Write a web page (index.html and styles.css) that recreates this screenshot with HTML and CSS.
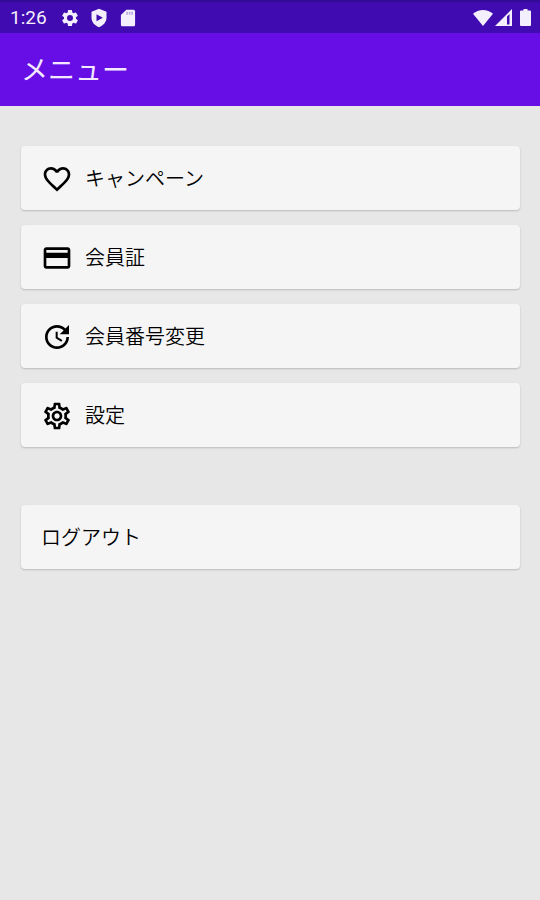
FILE: index.html
```html
<!DOCTYPE html>
<html lang="ja">
<head>
<meta charset="utf-8">
<meta name="viewport" content="width=device-width, initial-scale=1">
<title>メニュー</title>
<link rel="stylesheet" href="styles.css">
</head>
<body>
<div class="status-bar">
  <span class="clock">1:26</span>
  <div class="notifications">
    <svg class="status-icon" viewBox="0 0 24 24" aria-hidden="true"><path d="M19.14 12.94c.04-.3.06-.61.06-.94 0-.32-.02-.64-.07-.94l2.03-1.58a.49.49 0 0 0 .12-.61l-1.92-3.32a.488.488 0 0 0-.59-.22l-2.39.96c-.5-.38-1.03-.7-1.62-.94l-.36-2.54a.484.484 0 0 0-.48-.41h-3.84c-.24 0-.43.17-.47.41l-.36 2.54c-.59.24-1.13.57-1.62.94l-2.39-.96c-.22-.08-.47 0-.59.22L2.740 8.870c-.12.21-.08.47.12.61l2.030 1.580c-.05.3-.09.63-.09.94s.02.64.07.94l-2.030 1.580a.49.49 0 0 0-.12.61l1.920 3.320c.12.22.37.29.59.22l2.390-.96c.5.38 1.030.7 1.620.94l.36 2.540c.05.24.24.41.48.41h3.840c.24 0 .44-.17.47-.41l.36-2.540c.59-.24 1.130-.56 1.620-.94l2.390.96c.22.08.47 0 .59-.22l1.920-3.320c.12-.22.07-.47-.12-.61l-2.010-1.580zM12 15.600A3.600 3.600 0 1 1 12 8.400a3.600 3.600 0 0 1 0 7.200z"/></svg>
    <svg class="status-icon" viewBox="0 0 24 24" aria-hidden="true"><path fill-rule="evenodd" d="M12 1 3 4.500v7c0 5.300 3.600 9.700 9 11.500 5.400-1.800 9-6.200 9-11.500v-7L12 1zM9 7.500v8.500l7.500-4.250L9 7.500z"/></svg>
    <svg class="status-icon" viewBox="0 0 24 24" aria-hidden="true"><path d="M18.500 2H10L3.500 8.500V20c0 1.100.9 2 2 2h13c1.100 0 2-.9 2-2V4c0-1.100-.9-2-2-2z"/><path class="sd-contacts" d="M10 4.500h2V8h-2zM13 4.500h2V8h-2zM16 4.500h2V8h-2z"/></svg>
  </div>
  <div class="system">
    <svg class="wifi" viewBox="0 0 20 18" aria-hidden="true"><path d="M10 1C6.200 1 2.800 2.400 0 4.700L10 17 20 4.700C17.200 2.400 13.800 1 10 1z"/></svg>
    <svg class="signal" viewBox="0 0 17 18" aria-hidden="true"><path fill-rule="evenodd" d="M17 0v17H0L17 0zM12 7.500v8h2.500V5z"/></svg>
    <svg class="battery" viewBox="0 0 11 18" aria-hidden="true"><path d="M3.500 0h4v1.500H10a1 1 0 0 1 1 1v13.500a1 1 0 0 1-1 1H1a1 1 0 0 1-1-1V2.500a1 1 0 0 1 1-1h2.500z"/></svg>
  </div>
</div>
<header class="app-bar"><h1 class="title">メニュー</h1></header>
<main class="content">
  <nav class="menu" aria-label="メニュー">
    <button class="menu-item" type="button">
      <svg class="item-icon" viewBox="0 0 24 24" aria-hidden="true"><path d="M16.500 3c-1.740 0-3.410.81-4.500 2.090C10.910 3.810 9.240 3 7.500 3 4.420 3 2 5.420 2 8.500c0 3.780 3.400 6.860 8.550 11.540L12 21.350l1.450-1.320C18.600 15.360 22 12.280 22 8.500 22 5.420 19.580 3 16.500 3zm-4.400 15.550-.1.100-.1-.1C7.140 14.240 4 11.390 4 8.500 4 6.500 5.500 5 7.500 5c1.540 0 3.040.99 3.570 2.360h1.870C13.460 5.990 14.960 5 16.500 5c2 0 3.500 1.500 3.500 3.500 0 2.890-3.140 5.740-7.900 10.050z"/></svg>
      キャンペーン
    </button>
    <button class="menu-item" type="button">
      <svg class="item-icon" viewBox="0 0 24 24" aria-hidden="true"><path d="M20 4H4c-1.110 0-1.990.89-1.990 2L2 18c0 1.110.89 2 2 2h16c1.110 0 2-.89 2-2V6c0-1.110-.89-2-2-2zm0 14H4v-6h16v6zm0-10H4V6h16v2z"/></svg>
      会員証
    </button>
    <button class="menu-item" type="button">
      <svg class="item-icon" viewBox="0 0 24 24" aria-hidden="true"><path d="M11 8v5l4.250 2.520.77-1.280-3.520-2.090V8H11zm10 2V3l-2.640 2.640C16.740 4.010 14.490 3 12 3c-4.970 0-9 4.030-9 9s4.030 9 9 9 9-4.030 9-9h-2c0 3.860-3.140 7-7 7s-7-3.140-7-7 3.140-7 7-7c1.930 0 3.680.79 4.950 2.050L14 10h7z"/></svg>
      会員番号変更
    </button>
    <button class="menu-item" type="button">
      <svg class="item-icon" viewBox="0 0 24 24" aria-hidden="true"><path d="M19.430 12.980c.04-.32.07-.64.07-.98 0-.34-.03-.66-.07-.98l2.110-1.650c.19-.15.24-.42.12-.64l-2-3.460c-.09-.16-.26-.25-.44-.25-.06 0-.12.01-.17.03l-2.490 1c-.52-.4-1.080-.73-1.690-.98l-.38-2.650C14.460 2.180 14.250 2 14 2h-4c-.25 0-.46.18-.49.42l-.38 2.650c-.61.25-1.170.59-1.690.98l-2.490-1c-.06-.02-.12-.03-.18-.03-.17 0-.34.09-.43.25l-2 3.460c-.13.22-.07.49.12.64l2.110 1.650c-.04.32-.07.65-.07.98 0 .33.03.66.07.98l-2.110 1.650c-.19.15-.24.42-.12.64l2 3.460c.09.16.26.25.44.25.06 0 .12-.01.17-.03l2.490-1c.52.4 1.080.73 1.690.98l.38 2.650c.03.24.24.42.49.42h4c.25 0 .46-.18.49-.42l.38-2.650c.61-.25 1.170-.59 1.690-.98l2.490 1c.06.02.12.03.18.03.17 0 .34-.09.43-.25l2-3.460c.12-.22.07-.49-.12-.64l-2.110-1.650zm-1.980-1.710c.04.31.05.52.05.73 0 .21-.02.43-.05.73l-.14 1.130.89.7 1.080.84-.7 1.210-1.270-.51-1.040-.42-.9.68c-.43.32-.84.56-1.250.73l-1.060.43-.16 1.130-.2 1.350h-1.400l-.19-1.350-.16-1.130-1.060-.43c-.43-.18-.83-.41-1.230-.71l-.91-.7-1.060.43-1.270.51-.7-1.210 1.080-.84.89-.7-.14-1.130c-.03-.31-.05-.54-.05-.74s.02-.43.05-.73l.14-1.130-.89-.7-1.080-.84.7-1.210 1.270.51 1.040.42.9-.68c.43-.32.84-.56 1.250-.73l1.060-.43.16-1.130.2-1.350h1.390l.19 1.350.16 1.130 1.060.43c.43.18.83.41 1.230.71l.91.7 1.060-.43 1.270-.51.7 1.210-1.070.85-.89.7.14 1.130zM12 8c-2.210 0-4 1.790-4 4s1.790 4 4 4 4-1.790 4-4-1.790-4-4-4zm0 6c-1.100 0-2-.9-2-2s.9-2 2-2 2 .9 2 2-.9 2-2 2z"/></svg>
      設定
    </button>
  </nav>
  <button class="menu-item" type="button">ログアウト</button>
</main>
</body>
</html>
```
FILE: styles.css
```css
* {
  box-sizing: border-box;
}

body {
  margin: 0;
  min-height: 100vh;
  background: #e7e7e7;
  color: #000;
  font-family: Roboto, "Noto Sans CJK JP", sans-serif;
}

svg {
  display: block;
  fill: currentColor;
}

.status-bar {
  display: flex;
  align-items: center;
  height: 33px;
  padding: 2px 9px 0 10px;
  background: linear-gradient(#300b90, #400bb0 3px);
  color: #f3effc;
}

.clock {
  font-size: 19px;
  line-height: 24px;
}

.notifications {
  display: flex;
  gap: 9px;
  margin-left: 13px;
}

.status-icon {
  width: 20px;
  height: 20px;
}

.sd-contacts {
  fill: #400bb0;
  opacity: 0.3;
}

.system {
  display: flex;
  margin-left: auto;
}

.wifi {
  width: 20px;
  height: 18px;
}

.signal {
  width: 17px;
  height: 18px;
  margin-left: 2px;
}

.battery {
  width: 11px;
  height: 18px;
  margin-left: 8px;
}

.app-bar {
  display: flex;
  align-items: center;
  height: 73px;
  padding: 2px 21px 0;
  background: #660ee5;
  color: #f3e8ff;
}

.title {
  margin: 0;
  font-size: 27px;
  font-weight: 400;
  line-height: 40px;
}

.content {
  padding: 40px 20px 40px 21px;
}

.menu {
  display: grid;
  gap: 15px;
  margin-bottom: 58px;
}

.menu-item {
  display: flex;
  align-items: center;
  gap: 12px;
  width: 100%;
  min-height: 64px;
  padding: 1px 20px 0;
  border: 0;
  border-radius: 4px;
  background: #f5f5f5;
  box-shadow: 0 1px 2px rgba(0, 0, 0, 0.2);
  color: inherit;
  font: inherit;
  font-size: 20px;
  font-weight: 350;
  line-height: 28px;
  text-align: left;
  cursor: pointer;
}

.item-icon {
  flex: none;
  width: 32px;
  height: 32px;
}
```
